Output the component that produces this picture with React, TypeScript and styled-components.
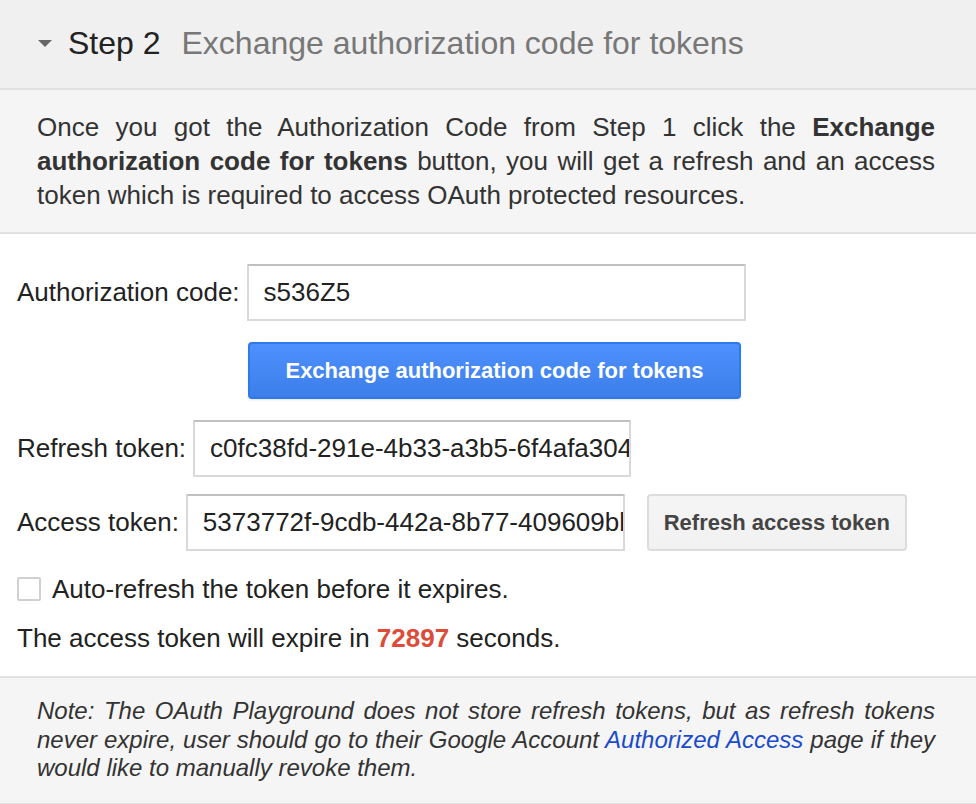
import React from "react";
import styled, { createGlobalStyle } from "styled-components";

const Global = createGlobalStyle`
  html, body { margin: 0; padding: 0; background: #ffffff; }
  body { font-family: "Liberation Sans", Arial, Helvetica, sans-serif; color: #222; }
  * { box-sizing: border-box; }
`;

const Panel = styled.div`
  width: 976px;
  display: flex;
  flex-direction: column;
`;

const Header = styled.div`
  height: 90px;
  background: #f0f0f0;
  border-bottom: 2px solid #e1e1e1;
  display: flex;
  align-items: center;
  padding-left: 38px;
  padding-bottom: 2px;
`;

const Caret = styled.span`
  width: 0;
  height: 0;
  border-left: 7px solid transparent;
  border-right: 7px solid transparent;
  border-top: 7px solid #666;
  margin-right: 16px;
`;

const StepNo = styled.span`
  font-size: 32px;
  color: #222;
  line-height: 40px;
`;

const StepTitle = styled.span`
  font-size: 32px;
  color: #777;
  line-height: 40px;
  margin-left: 21px;
`;

const Description = styled.div`
  background: #f5f5f5;
  border-bottom: 2px solid #e1e1e1;
  padding: 20px 41px 20px 37px;
  font-size: 26px;
  line-height: 34px;
  color: #333;
  text-align: justify;
  b { font-weight: bold; }
`;

const Form = styled.div`
  background: #fff;
  padding: 30px 17px 23px 17px;
  display: flex;
  flex-direction: column;
`;

const Row = styled.div<{ $mt?: number }>`
  display: flex;
  align-items: center;
  margin-top: ${(p) => p.$mt ?? 0}px;
`;

const Label = styled.label`
  font-size: 26px;
  color: #222;
  margin-right: 7px;
  white-space: nowrap;
`;

const TextInput = styled.input<{ $w: number }>`
  width: ${(p) => p.$w}px;
  height: 57px;
  border: 2px solid #d9d9d9;
  border-top-color: #c0c0c0;
  border-radius: 1px;
  padding: 0 0 0 15px;
  font-family: "Liberation Sans", Arial, sans-serif;
  font-size: 26px;
  color: #222;
  background: #fff;
  outline: none;
`;

const PrimaryButton = styled.button`
  margin-left: 231px;
  width: 493px;
  height: 57px;
  border: 2px solid #3079ed;
  border-radius: 4px;
  background: linear-gradient(#4d90fe, #3d7fe9);
  box-shadow: 0 1px 2px rgba(0, 0, 0, 0.1);
  color: #fff;
  font-family: "Liberation Sans", Arial, sans-serif;
  font-weight: bold;
  font-size: 22px;
  cursor: pointer;
`;

const SecondaryButton = styled.button`
  margin-left: 22px;
  width: 260px;
  height: 57px;
  border: 2px solid #dcdcdc;
  border-radius: 4px;
  background: linear-gradient(#f5f5f5, #f1f1f1);
  color: #444;
  font-family: "Liberation Sans", Arial, sans-serif;
  font-weight: bold;
  font-size: 22px;
  cursor: pointer;
`;

const CheckBox = styled.span`
  width: 24px;
  height: 24px;
  border: 2px solid #d0d0d0;
  border-radius: 2px;
  background: #fff;
  margin-right: 11px;
  flex: none;
`;

const PlainText = styled.div<{ $mt?: number }>`
  font-size: 26px;
  line-height: 30px;
  color: #222;
  margin-top: ${(p) => p.$mt ?? 0}px;
`;

const Seconds = styled.b`
  color: #dd4b39;
  font-weight: bold;
`;

const Note = styled.div`
  background: #f5f5f5;
  border-top: 2px solid #e1e1e1;
  border-bottom: 2px solid #e1e1e1;
  padding: 19px 41px 20px 37px;
  font-size: 24px;
  line-height: 28.5px;
  font-style: italic;
  color: #333;
  text-align: justify;
`;

const Link = styled.a`
  color: #1a4bcc;
  text-decoration: none;
`;

export default function App() {
  return (
    <>
      <Global />
      <Panel>
        <Header>
          <Caret />
          <StepNo>Step 2</StepNo>
          <StepTitle>Exchange authorization code for tokens</StepTitle>
        </Header>
        <Description>
          Once you got the Authorization Code from Step 1 click the{" "}
          <b>Exchange authorization code for tokens</b> button, you will get a refresh and an access
          token which is required to access OAuth protected resources.
        </Description>
        <Form>
          <Row>
            <Label>Authorization code:</Label>
            <TextInput $w={499} defaultValue="s536Z5" readOnly />
          </Row>
          <Row $mt={21}>
            <PrimaryButton>Exchange authorization code for tokens</PrimaryButton>
          </Row>
          <Row $mt={21}>
            <Label>Refresh token:</Label>
            <TextInput $w={438} defaultValue="c0fc38fd-291e-4b33-a3b5-6f4afa304e7c" readOnly />
          </Row>
          <Row $mt={17}>
            <Label>Access token:</Label>
            <TextInput $w={439} defaultValue="5373772f-9cdb-442a-8b77-409609bb21aa" readOnly />
            <SecondaryButton>Refresh access token</SecondaryButton>
          </Row>
          <Row $mt={23}>
            <CheckBox />
            <PlainText>Auto-refresh the token before it expires.</PlainText>
          </Row>
          <PlainText $mt={19}>
            The access token will expire in <Seconds>72897</Seconds> seconds.
          </PlainText>
        </Form>
        <Note>
          Note: The OAuth Playground does not store refresh tokens, but as refresh tokens never
          expire, user should go to their Google Account <Link href="#">Authorized Access</Link> page
          if they would like to manually revoke them.
        </Note>
      </Panel>
    </>
  );
}
